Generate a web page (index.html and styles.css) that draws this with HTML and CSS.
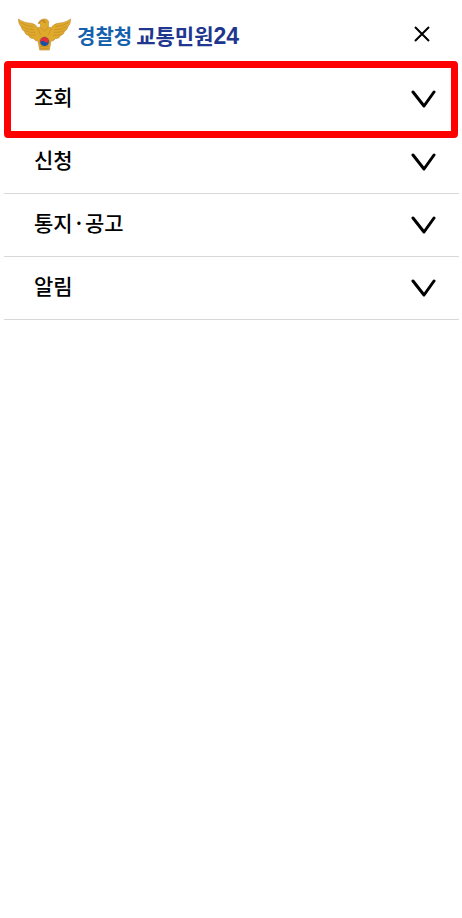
FILE: index.html
```
<!DOCTYPE html>
<html lang="ko">
<head>
  <meta charset="UTF-8">
  <meta name="viewport" content="width=device-width, initial-scale=1.0">
  <title>경찰청 교통민원24</title>
  <link rel="stylesheet" href="styles.css">
</head>
<body>
  <header class="header">
    <a class="logo" href="#">
      <svg class="emblem" viewBox="0 0 159 99" aria-hidden="true">
        <path class="wing" d="M1 3 C13 12 27 15 40 16 Q53 18 59 29 L68 27 L67 17 L60 16 Q65 5 76 3 Q88 1 92 10 L91 27 L100 29 Q106 18 119 16 C132 15 146 12 158 3 Q157 20 149 27 L147 34 L139 41 L136 48 L127 53 L122 60 L112 62 L106 68 L99 69 L94 96 L65 96 L60 69 L53 68 L47 62 L37 60 L32 53 L23 48 L20 41 L12 34 L10 27 Q2 20 1 3Z"/>
        <path class="feather" d="M8 14 Q27 26 46 26 M11 25 Q28 36 49 35 M19 37 Q34 45 51 43 M29 49 Q40 54 54 51 M151 14 Q132 26 113 26 M148 25 Q131 36 110 35 M140 37 Q125 45 108 43 M130 49 Q119 54 105 51 M67 28 L79 39 L92 28 M59 31 L68 51 M100 31 L91 51 M66 86 L93 86 M66 91 L93 91"/>
        <path class="head" d="M63 15 Q70 5 80 8 L76 12 L84 14"/>
        <circle class="ring" cx="79.500" cy="71" r="16"/>
        <circle class="blue" cx="79.500" cy="71" r="13"/>
        <path class="red" d="M67 75 A13 13 0 1 1 92 67 C88 78 83 73 80 71 C75 66 69 68 67 75Z"/>
      </svg>
      <span class="logo-text">
        <span class="police">경찰청</span>
        <span class="service">교통민원<span class="number">24</span></span>
      </span>
    </a>
    <button class="close" type="button" aria-label="닫기">
      <svg viewBox="0 0 16 16" aria-hidden="true"><path d="M1 1 L15 15 M15 1 L1 15"/></svg>
    </button>
  </header>

  <nav>
    <ul class="menu">
      <li class="menu-item selected">
        <button class="menu-button" type="button">
          <span class="menu-text">조회</span>
          <svg class="arrow" viewBox="0 0 26 18" aria-hidden="true"><path d="M3 2 L14 16 L24 2"/></svg>
        </button>
      </li>
      <li class="menu-item">
        <button class="menu-button" type="button">
          <span class="menu-text">신청</span>
          <svg class="arrow" viewBox="0 0 26 18" aria-hidden="true"><path d="M3 2 L14 16 L24 2"/></svg>
        </button>
      </li>
      <li class="menu-item">
        <button class="menu-button" type="button">
          <span class="menu-text">통지<span class="dot">·</span>공고</span>
          <svg class="arrow" viewBox="0 0 26 18" aria-hidden="true"><path d="M3 2 L14 16 L24 2"/></svg>
        </button>
      </li>
      <li class="menu-item">
        <button class="menu-button" type="button">
          <span class="menu-text">알림</span>
          <svg class="arrow" viewBox="0 0 26 18" aria-hidden="true"><path d="M3 2 L14 16 L24 2"/></svg>
        </button>
      </li>
    </ul>
  </nav>
</body>
</html>
```

FILE: styles.css
```
* {
  box-sizing: border-box;
}

body {
  margin: 0;
  background: #fff;
  color: #000;
  font-family: "Noto Sans CJK KR", sans-serif;
}

button {
  border: 0;
  background: none;
  color: inherit;
  font-family: inherit;
  cursor: pointer;
}

svg {
  display: block;
  fill: none;
}

.header {
  display: flex;
  align-items: center;
  justify-content: space-between;
  height: 68px;
  padding: 0 28px 0 18px;
}

.logo {
  display: flex;
  align-items: center;
  gap: 6px;
  color: #21368f;
  text-decoration: none;
}

.emblem {
  width: 53px;
  height: 33px;
}

.wing {
  fill: #dfa92c;
  stroke: #c4933f;
  stroke-width: 2;
}

.feather {
  stroke: #c18d28;
  stroke-width: 2;
}

.head {
  stroke: #a87521;
  stroke-width: 2;
}

.ring {
  fill: #c99025;
}

.blue {
  fill: #1553a5;
}

.red {
  fill: #e52b35;
}

.logo-text {
  display: flex;
  align-items: baseline;
  gap: 4px;
  padding-top: 3px;
  font-size: 20px;
  font-weight: 700;
  line-height: 30px;
}

.police {
  color: #1561ad;
}

.service {
  font-size: 21px;
}

.number {
  font-family: "Liberation Sans", sans-serif;
  font-size: 23px;
}

.close {
  width: 24px;
  height: 24px;
  padding: 4px;
}

.close path {
  stroke: #000;
  stroke-width: 2;
}

.menu {
  margin: 0;
  padding: 0 3px 0 4px;
  list-style: none;
}

.menu-item {
  position: relative;
  border-bottom: 1px solid #d8d8d8;
}

.menu-button {
  display: flex;
  align-items: center;
  justify-content: space-between;
  width: 100%;
  height: 62px;
  padding: 0 23px 0 30px;
  font-size: 21px;
  font-weight: 500;
}

.menu-text {
  padding-bottom: 6px;
}

.dot {
  padding: 0 3px;
}

.arrow {
  width: 26px;
  height: 18px;
}

.arrow path {
  stroke: #000;
  stroke-width: 3;
  stroke-linecap: round;
  stroke-linejoin: round;
}

/* red frame around the selected menu */
.selected {
  border-bottom-color: transparent;
}

.selected::after {
  content: '';
  position: absolute;
  inset: -7px 1px -8px 0;
  border: 7px solid #f00;
  border-radius: 4px;
  pointer-events: none;
}
```
